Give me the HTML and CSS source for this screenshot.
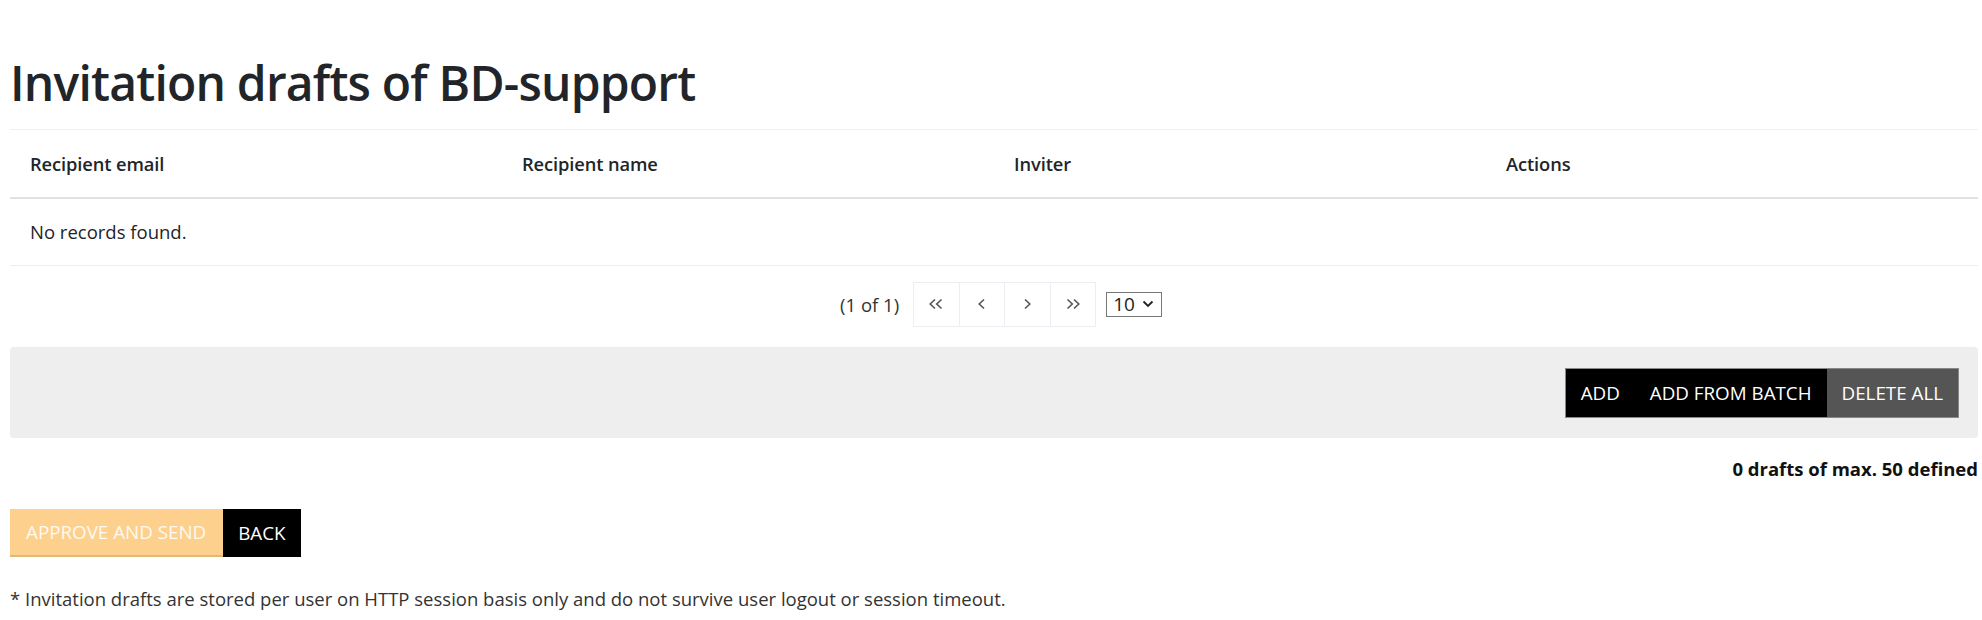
FILE: index.html
```html
<!DOCTYPE html>
<html lang="en">
<head>
<meta charset="utf-8">
<title>Invitation drafts of BD-support</title>
<link rel="stylesheet" href="styles.css">
</head>
<body>
<div class="page">
  <h1 class="title">Invitation drafts of BD-support</h1>
  <table class="grid">
    <thead>
      <tr>
        <th>Recipient email</th>
        <th>Recipient name</th>
        <th>Inviter</th>
        <th>Actions</th>
      </tr>
    </thead>
    <tbody>
      <tr><td colspan="4">No records found.</td></tr>
    </tbody>
  </table>
  <div class="paginator">
    <span class="page-info">(1 of 1)</span>
    <div class="pager">
      <span class="pbtn"><svg width="16" height="12" viewBox="0 0 16 12"><path d="M7 1.5L2.2 6 7 10.5M13.5 1.5L8.7 6 13.5 10.5" fill="none" stroke="#555" stroke-width="1.6"/></svg></span>
      <span class="pbtn"><svg width="9" height="12" viewBox="0 0 9 12"><path d="M7 1.5L2.2 6 7 10.5" fill="none" stroke="#555" stroke-width="1.6"/></svg></span>
      <span class="pbtn"><svg width="9" height="12" viewBox="0 0 9 12"><path d="M2 1.5L6.8 6 2 10.5" fill="none" stroke="#555" stroke-width="1.6"/></svg></span>
      <span class="pbtn"><svg width="16" height="12" viewBox="0 0 16 12"><path d="M2.5 1.5L7.3 6 2.5 10.5M9 1.5L13.8 6 9 10.5" fill="none" stroke="#555" stroke-width="1.6"/></svg></span>
    </div>
    <span class="rows">10 <svg class="chev" width="12" height="8" viewBox="0 0 12 8"><path d="M1.5 1.5l4.5 4.5 4.5-4.5" fill="none" stroke="#222" stroke-width="1.8"/></svg></span>
  </div>
  <div class="toolbar">
    <div class="btn-group">
      <span class="btn btn-dark">ADD</span>
      <span class="btn btn-dark">ADD FROM BATCH</span>
      <span class="btn btn-grey">DELETE ALL</span>
    </div>
  </div>
  <div class="count">0 drafts of max. 50 defined</div>
  <div class="actions">
    <span class="btn btn-approve">APPROVE AND SEND</span>
    <span class="btn btn-back">BACK</span>
  </div>
  <p class="note">* Invitation drafts are stored per user on HTTP session basis only and do not survive user logout or session timeout.</p>
</div>
</body>
</html>
```
FILE: styles.css
```css
html, body {
  margin: 0;
  padding: 0;
  background: #fff;
}
body {
  font-family: "Open Sans", "Noto Sans", sans-serif;
  font-size: 18.5px;
  color: #212529;
}
.page {
  padding: 0 4px 0 10px;
}
.title {
  margin: 0;
  padding-top: 54px;
  padding-bottom: 17px;
  font-size: 48px;
  font-weight: 600;
  line-height: 1.2;
  color: #212529;
  letter-spacing: -0.8px;
}
.grid {
  width: 100%;
  border-collapse: collapse;
  table-layout: fixed;
}
.grid th {
  text-align: left;
  font-weight: 600;
  height: 67px;
  padding: 0 20px;
  border-top: 1px solid #eef0f2;
  border-bottom: 2px solid #dee2e6;
  font-size: 18.3px;
  letter-spacing: -0.1px;
}
.grid td {
  height: 66px;
  padding: 0 20px;
  border-bottom: 1px solid #eceef0;
}
.paginator {
  display: flex;
  justify-content: center;
  align-items: center;
  gap: 15px;
  padding: 16px 0 20px 14px;
}
.page-info {
  color: #333;
}
.pager {
  display: flex;
}
.pbtn {
  display: flex;
  align-items: center;
  justify-content: center;
  border: 1px solid #eceef3;
  margin-left: -1px;
  box-sizing: border-box;
  height: 45px;
  width: 46.5px;
}
.rows {
  display: flex;
  align-items: center;
  gap: 7px;
  height: 25px;
  box-sizing: border-box;
  padding: 0 7px 0 6px;
  border: 1px solid #777;
  font-size: 19px;
  margin-left: -5px;
  color: #222;
}
.chev {
  display: block;
}
.toolbar {
  background: #eeeeee;
  border-radius: 4px;
  padding: 21px 19px 20px;
  display: flex;
  justify-content: flex-end;
}
.btn-group {
  display: flex;
  border: 1px solid #888;
}
.btn {
  display: flex;
  align-items: center;
  height: 48px;
  box-sizing: border-box;
  padding: 0 15px;
  font-size: 18.8px;
  color: #fff;
  white-space: nowrap;
}
.btn-dark {
  background: #000;
}
.btn-grey {
  background: #555;
}
.count {
  text-align: right;
  font-weight: 700;
  font-size: 18.5px;
  padding-top: 18px;
  color: #111;
}
.actions {
  display: flex;
  margin-top: 28px;
}
.btn-approve {
  background: #fdd08d;
  color: #fff9f0;
  border-bottom: 2px solid #e3b777;
  padding: 0 17px 0 16px;
}
.btn-back {
  background: #000;
  padding: 0 15px;
}
.note {
  margin: 29px 0 0;
  color: #333;
}
```
